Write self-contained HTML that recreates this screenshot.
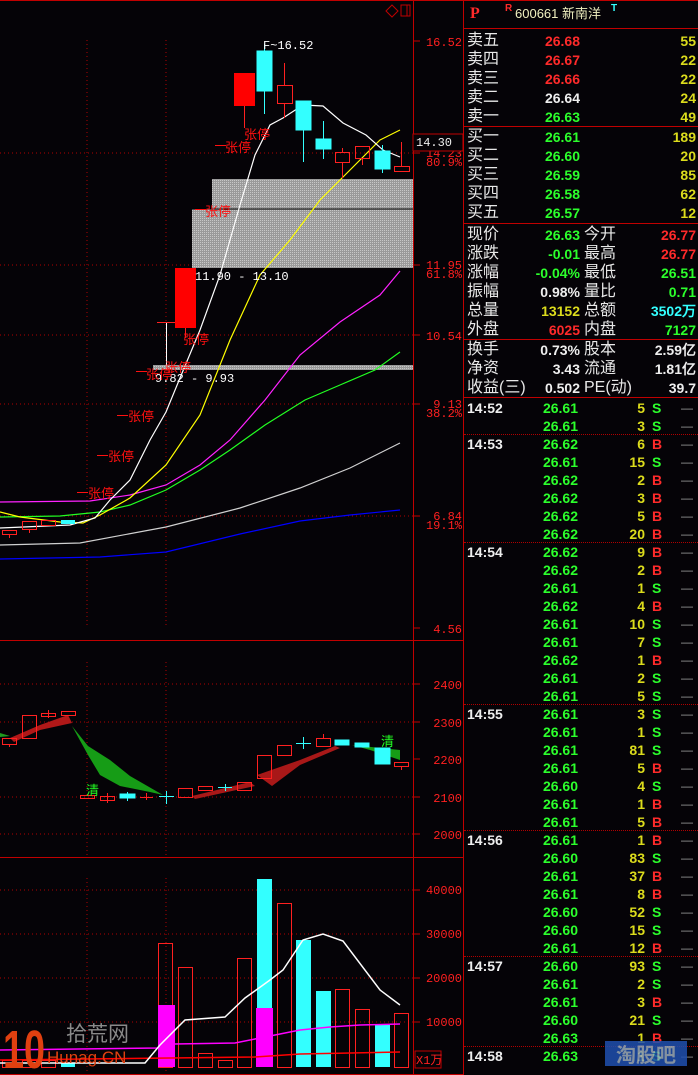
<!DOCTYPE html>
<html><head><meta charset="utf-8">
<style>
html,body{margin:0;padding:0;background:#050307;}
body{width:698px;height:1075px;position:relative;overflow:hidden;font-family:"Liberation Sans","Noto Sans CJK SC",sans-serif;}
.t{position:absolute;white-space:nowrap;line-height:18px;}
.l{font-size:16px;color:#e8e8e8;font-family:"Liberation Sans","Noto Sans CJK SC",sans-serif;}
.n{font-family:"Liberation Sans","DejaVu Sans",sans-serif;font-weight:bold;font-size:14px;}
.r{color:#ff2a2a}.g{color:#2cff2c}.w{color:#eeeeee}.y{color:#dcdc1c}.c{color:#33ffff}.gr{color:#999;font-weight:normal;font-size:12px}
.ra{text-align:right}
</style></head><body>
<svg width="698" height="1075" style="position:absolute;left:0;top:0" xmlns="http://www.w3.org/2000/svg" font-family="Liberation Mono, monospace">
<defs>
<pattern id="gp" width="2" height="2" patternUnits="userSpaceOnUse"><rect width="2" height="2" fill="#9a9a9a"/><rect width="1" height="1" fill="#c8c8c8"/></pattern>
</defs>
<line x1="0" y1="0.5" x2="698" y2="0.5" stroke="#c00000"/>
<line x1="413.5" y1="0" x2="413.5" y2="1075" stroke="#c00000"/>
<line x1="463.5" y1="0" x2="463.5" y2="1075" stroke="#c00000"/>
<line x1="0" y1="640.5" x2="463" y2="640.5" stroke="#c00000"/>
<line x1="0" y1="857.5" x2="463" y2="857.5" stroke="#c00000"/>
<line x1="0" y1="1074.5" x2="463" y2="1074.5" stroke="#c00000"/>
<path d="M392 5 L398 11 L392 17 L386 11 Z" fill="none" stroke="#c00000"/>
<rect x="401" y="5" width="9" height="11" fill="none" stroke="#c00000"/><line x1="407" y1="5" x2="407" y2="16" stroke="#c00000"/>
<g stroke="#b00000" stroke-dasharray="1,3">
<line x1="0" y1="153" x2="413" y2="153"/><line x1="0" y1="265" x2="413" y2="265"/><line x1="0" y1="335" x2="413" y2="335"/>
<line x1="0" y1="404" x2="413" y2="404"/><line x1="0" y1="516" x2="413" y2="516"/>
<line x1="87" y1="40" x2="87" y2="628"/><line x1="166" y1="40" x2="166" y2="628"/>
<line x1="0" y1="684" x2="413" y2="684"/><line x1="0" y1="722" x2="413" y2="722"/><line x1="0" y1="797" x2="413" y2="797"/><line x1="0" y1="834" x2="413" y2="834"/>
<line x1="87" y1="662" x2="87" y2="855"/><line x1="166" y1="662" x2="166" y2="855"/>
<line x1="0" y1="890" x2="413" y2="890"/><line x1="0" y1="934" x2="413" y2="934"/><line x1="0" y1="978" x2="413" y2="978"/><line x1="0" y1="1022" x2="413" y2="1022"/>
<line x1="87" y1="878" x2="87" y2="1072"/><line x1="166" y1="878" x2="166" y2="1072"/>
</g>
<g stroke="#c00000">
<line x1="413" y1="41" x2="420" y2="41"/><line x1="413" y1="153" x2="420" y2="153"/><line x1="413" y1="265" x2="420" y2="265"/><line x1="413" y1="335" x2="420" y2="335"/><line x1="413" y1="404" x2="420" y2="404"/><line x1="413" y1="516" x2="420" y2="516"/><line x1="413" y1="628" x2="420" y2="628"/>
<line x1="413" y1="684" x2="420" y2="684"/><line x1="413" y1="722" x2="420" y2="722"/><line x1="413" y1="759" x2="420" y2="759"/><line x1="413" y1="797" x2="420" y2="797"/><line x1="413" y1="834" x2="420" y2="834"/>
<line x1="413" y1="890" x2="420" y2="890"/><line x1="413" y1="934" x2="420" y2="934"/><line x1="413" y1="978" x2="420" y2="978"/><line x1="413" y1="1022" x2="420" y2="1022"/>
</g>
<g fill="#ff2020" font-size="12" text-anchor="end">
<text x="462" y="46">16.52</text>
<text x="462" y="157">14.23</text><text x="462" y="166">80.9%</text>
<text x="462" y="269">11.95</text><text x="462" y="278">61.8%</text>
<text x="462" y="340">10.54</text>
<text x="462" y="408">9.13</text><text x="462" y="417">38.2%</text>
<text x="462" y="520">6.84</text><text x="462" y="529">19.1%</text>
<text x="462" y="633">4.56</text>
<text x="462" y="689">2400</text><text x="462" y="727">2300</text><text x="462" y="764">2200</text><text x="462" y="802">2100</text><text x="462" y="839">2000</text>
<text x="462" y="894">40000</text><text x="462" y="938">30000</text><text x="462" y="982">20000</text><text x="462" y="1026">10000</text>
</g>
<rect x="413" y="134" width="50" height="17" fill="#050307" stroke="#c00000"/>
<text x="416" y="146" fill="#eee" font-size="12">14.30</text>
<rect x="415" y="1051" width="26" height="17" fill="none" stroke="#c00000"/>
<text x="416" y="1064" fill="#ff2020" font-size="12">X1万</text>
<rect x="212" y="179" width="201" height="30" fill="url(#gp)"/>
<rect x="192" y="209" width="221" height="59" fill="url(#gp)"/>
<line x1="192" y1="209" x2="413" y2="209" stroke="#000"/>
<rect x="153" y="365" width="260" height="5" fill="url(#gp)"/>
<g fill="none" stroke-width="1.2">
<polyline stroke="#0000ff" points="0,559 100,557 166,552 240,534 300,521 350,515 400,510"/>
<polyline stroke="#d0d0d0" points="0,545 80,543 166,527 240,508 300,488 350,468 400,443"/>
<polyline stroke="#22ff22" points="0,517 60,516 100,512 130,505 166,490 200,470 230,450 265,425 305,400 340,385 375,370 400,352"/>
<polyline stroke="#ff22ff" points="0,502 90,501 130,495 166,485 200,465 230,440 265,400 300,355 340,322 380,295 400,271"/>
<polyline stroke="#ffff00" points="0,512 20,517 60,522 83,523 100,515 130,498 166,465 200,415 230,340 260,275 290,240 320,200 350,170 380,140 400,130"/>
<polyline stroke="#ffffff" points="0,528 70,525 95,518 110,500 130,480 150,440 166,412 180,378 200,330 220,275 240,205 255,155 270,125 283,118 303,105 323,106 343,123 366,135 383,150 400,157"/>
</g>
<g stroke="#ff2020" fill="none">
<rect x="2.5" y="530.5" width="14" height="4"/><line x1="9.5" y1="534" x2="9.5" y2="538"/>
<rect x="22.5" y="521.5" width="14" height="8"/><line x1="29.5" y1="529" x2="29.5" y2="533"/>
<rect x="41.5" y="520.5" width="14" height="5"/>
<rect x="277.5" y="85.5" width="15" height="18"/><line x1="284.5" y1="63" x2="284.5" y2="85"/><line x1="284.5" y1="103" x2="284.5" y2="118"/>
<rect x="335.5" y="152.5" width="14" height="10"/><line x1="342.5" y1="148" x2="342.5" y2="152"/><line x1="342.5" y1="162" x2="342.5" y2="178"/>
<rect x="355.5" y="146.5" width="14" height="12"/><line x1="362.5" y1="158" x2="362.5" y2="165"/>
<rect x="394.5" y="166.5" width="15" height="5"/><line x1="401.5" y1="142" x2="401.5" y2="166"/>
<line x1="244.5" y1="106" x2="244.5" y2="128"/><line x1="185.5" y1="328" x2="185.5" y2="338"/>
</g>
<rect x="61" y="520" width="14" height="4" fill="#33ffff"/>
<rect x="234" y="73" width="21" height="33" fill="#ff0000"/>
<rect x="175" y="268" width="21" height="60" fill="#ff0000"/>
<line x1="166.5" y1="322" x2="166.5" y2="370" stroke="#fff"/><line x1="157" y1="322.5" x2="175" y2="322.5" stroke="#ff2020"/>
<g fill="#33ffff" stroke="#33ffff">
<rect x="257" y="51" width="15" height="40"/><line x1="264.5" y1="44" x2="264.5" y2="114"/>
<rect x="296" y="101" width="15" height="29"/><line x1="303.5" y1="130" x2="303.5" y2="162"/>
<rect x="316" y="139" width="15" height="10"/><line x1="323.5" y1="121" x2="323.5" y2="159"/>
<rect x="375" y="151" width="15" height="18"/><line x1="382.5" y1="145" x2="382.5" y2="173"/>
</g>
<text x="263" y="49" fill="#fff" font-size="12">F~16.52</text>
<text x="195" y="280" fill="#fff" font-size="12">11.90 - 13.10</text>
<text x="155" y="382" fill="#fff" font-size="12">9.82 - 9.93</text>
<g fill="#ff1010" font-size="13" font-family="Noto Sans CJK SC, sans-serif">
<text x="244" y="139">张停</text><text x="225" y="152">张停</text><text x="205" y="216">张停</text><text x="183" y="344">张停</text>
<text x="165" y="372">张停</text><text x="146" y="379">张停</text><text x="128" y="421">张停</text><text x="108" y="461">张停</text><text x="88" y="498">张停</text>
</g>
<g stroke="#ff1010"><line x1="215" y1="145.5" x2="226" y2="145.5"/><line x1="195" y1="209.5" x2="206" y2="209.5"/><line x1="136" y1="371.5" x2="147" y2="371.5"/><line x1="117" y1="415.5" x2="128" y2="415.5"/><line x1="97" y1="455.5" x2="108" y2="455.5"/><line x1="77" y1="492.5" x2="88" y2="492.5"/></g>
<polygon fill="#1e9a1e" points="0,733 10,736 0,737"/>
<polygon fill="#b01818" points="10,738 40,725 68,715 72,723 40,730 14,742"/>
<polygon fill="#169c16" points="72,726 88,746 110,760 130,776 163,795 150,792 120,786 100,775 88,755"/>
<polygon fill="#a81818" points="192,796 250,782 255,786 195,799"/>
<polygon fill="#a81818" points="257,775 300,760 335,746 340,748 300,765 272,786"/>
<polygon fill="#169c16" points="352,745 400,750 400,760 370,750"/>
<g stroke="#ff2020" fill="none">
<rect x="2.5" y="738.5" width="14" height="6"/><line x1="9.5" y1="744" x2="9.5" y2="747"/>
<rect x="22.5" y="715.5" width="14" height="23"/>
<rect x="41.5" y="713.5" width="14" height="3"/><line x1="48.5" y1="710" x2="48.5" y2="718"/>
<rect x="61.5" y="711.5" width="14" height="4"/>
<rect x="80.5" y="795.5" width="14" height="3"/>
<rect x="100.5" y="796.5" width="14" height="4"/><line x1="107.5" y1="793" x2="107.5" y2="803"/>
<line x1="140" y1="797.5" x2="153" y2="797.5"/><line x1="146.5" y1="793" x2="146.5" y2="800"/>
<rect x="178.5" y="788.5" width="14" height="9"/>
<rect x="198.5" y="786.5" width="14" height="4"/>
<rect x="237.5" y="782.5" width="14" height="8"/>
<rect x="257.5" y="755.5" width="14" height="23"/>
<rect x="277.5" y="745.5" width="14" height="10"/>
<rect x="316.5" y="738.5" width="14" height="8"/><line x1="323.5" y1="734" x2="323.5" y2="738"/>
<rect x="394.5" y="762.5" width="14" height="4"/><line x1="401.5" y1="766" x2="401.5" y2="770"/>
</g>
<g fill="#33ffff" stroke="#33ffff">
<rect x="120" y="794" width="15" height="4"/><line x1="127.5" y1="792" x2="127.5" y2="801"/>
<line x1="159" y1="796.5" x2="174" y2="796.5"/><line x1="166.5" y1="791" x2="166.5" y2="804"/>
<line x1="218" y1="787.5" x2="232" y2="787.5"/><line x1="225.5" y1="784" x2="225.5" y2="791"/>
<line x1="296" y1="743.5" x2="311" y2="743.5"/><line x1="303.5" y1="737" x2="303.5" y2="749"/>
<rect x="335" y="740" width="14" height="5"/>
<rect x="355" y="743" width="14" height="4"/>
<rect x="375" y="748" width="15" height="16"/>
</g>
<g fill="#22ff22" font-size="13" font-family="Noto Sans CJK SC, sans-serif"><text x="86" y="795">清</text><text x="381" y="746">清</text></g>
<g stroke="#ff2020" fill="none">
<rect x="158.5" y="943.5" width="14" height="124"/>
<rect x="178.5" y="967.5" width="14" height="100"/>
<rect x="198.5" y="1053.5" width="14" height="14"/>
<rect x="218.5" y="1060.5" width="14" height="7"/>
<rect x="237.5" y="958.5" width="14" height="109"/>
<rect x="277.5" y="903.5" width="14" height="164"/>
<rect x="335.5" y="989.5" width="14" height="78"/>
<rect x="355.5" y="1009.5" width="14" height="58"/>
<rect x="394.5" y="1013.5" width="14" height="54"/>
<rect x="2.5" y="1060.5" width="14" height="7"/><rect x="22.5" y="1060.5" width="14" height="7"/><rect x="41.5" y="1060.5" width="14" height="7"/>
</g>
<rect x="158" y="1005" width="17" height="62" fill="#ff00ff"/>
<rect x="257" y="879" width="15" height="188" fill="#33ffff"/>
<rect x="256" y="1008" width="17" height="59" fill="#ff00ff"/>
<rect x="296" y="940" width="15" height="127" fill="#33ffff"/>
<rect x="316" y="991" width="15" height="76" fill="#33ffff"/>
<rect x="375" y="1025" width="15" height="42" fill="#33ffff"/>
<rect x="61" y="1063" width="14" height="4" fill="#33ffff"/>
<polyline fill="none" stroke="#ff00ff" stroke-width="1.5" points="0,1050 158,1048 175,1044 235,1043 275,1035 300,1030 330,1027 360,1025 400,1024"/>
<polyline fill="none" stroke="#ff0000" stroke-width="1.5" points="0,1060 255,1057 300,1054 400,1052"/>
<polyline fill="none" stroke="#ffffff" stroke-width="1.5" points="0,1063 145,1063 160,1045 185,1020 225,1017 245,998 270,980 283,970 303,940 323,934 343,941 380,990 400,1005"/>
<text x="3" y="1068" fill="#e04010" font-size="54" font-weight="bold" font-family="Liberation Sans, sans-serif" textLength="42" lengthAdjust="spacingAndGlyphs">10</text>
<text x="66" y="1041" fill="#8a8a8a" font-size="21" font-family="Noto Sans CJK SC, sans-serif">拾荒网</text>
<text x="47" y="1063" fill="#e04010" font-size="17" font-family="Liberation Sans, sans-serif">Hunag.CN</text>
</svg>

<div style="position:absolute;left:464px;top:28px;width:234px;border-top:1px solid #c00000"></div>
<div style="position:absolute;left:464px;top:126px;width:234px;border-top:1px solid #c00000"></div>
<div style="position:absolute;left:464px;top:223px;width:234px;border-top:1px solid #c00000"></div>
<div style="position:absolute;left:464px;top:339px;width:234px;border-top:1px solid #c00000"></div>
<div style="position:absolute;left:464px;top:397px;width:234px;border-top:1px solid #c00000"></div>

<div class="t r" style="left:470px;top:5px;font-size:16px;font-weight:bold;font-family:'Liberation Serif',serif">P</div>
<div class="t r" style="left:505px;top:0px;font-size:10px;font-weight:bold">R</div>
<div class="t" style="left:515px;top:5px;font-size:13px;color:#f0f0c0;font-family:'Liberation Sans','Noto Sans CJK SC',sans-serif">600661 新南洋</div>
<div class="t c" style="left:611px;top:0px;font-size:10px;font-weight:bold">T</div>

<div id="rp"></div>
<div style="position:absolute;left:605px;top:1041px;width:82px;height:25px;background:#2050b0;opacity:.85;color:#9ab;font-size:20px;font-weight:bold;line-height:25px;text-align:center;font-family:'Noto Sans CJK SC',sans-serif">淘股吧</div>
<script>
var h='';
function T(x,y,cls,txt,w,right){h+='<div class="t '+cls+(right?' ra':'')+'" style="left:'+x+'px;top:'+y+'px;'+(w?'width:'+w+'px;':'')+'">'+txt+'</div>';}
var ob=[['卖五','26.68','r','55'],['卖四','26.67','r','22'],['卖三','26.66','r','22'],['卖二','26.64','w','24'],['卖一','26.63','g','49']];
ob.forEach(function(o,i){var y=32+i*19;T(467,y,'l',o[0]);T(490,y,'n '+o[2],o[1],90,1);T(620,y,'n y',o[3],76,1);});
var bb=[['买一','26.61','189'],['买二','26.60','20'],['买三','26.59','85'],['买四','26.58','62'],['买五','26.57','12']];
bb.forEach(function(o,i){var y=128+i*19;T(467,y,'l',o[0]);T(490,y,'n g',o[1],90,1);T(620,y,'n y',o[2],76,1);});
var st=[['现价','26.63','g','今开','26.77','r'],['涨跌','-0.01','g','最高','26.77','r'],['涨幅','-0.04%','g','最低','26.51','g'],['振幅','0.98%','w','量比','0.71','g'],['总量','13152','y','总额','3502万','c'],['外盘','6025','r','内盘','7127','g']];
st.forEach(function(o,i){var y=226+i*19;T(467,y,'l',o[0]);T(490,y,'n '+o[2],o[1],90,1);T(584,y,'l',o[3]);T(620,y,'n '+o[5],o[4],76,1);});
var s2=[['换手','0.73%','股本','2.59亿'],['净资','3.43','流通','1.81亿'],['收益(三)','0.502','PE(动)','39.7']];
s2.forEach(function(o,i){var y=341+i*19;T(467,y,'l',o[0]);T(490,y,'n w',o[1],90,1);T(584,y,'l',o[2]);T(620,y,'n w',o[3],76,1);});
var tk=[['14:52',[['26.61',5,'S'],['26.61',3,'S']]],['14:53',[['26.62',6,'B'],['26.61',15,'S'],['26.62',2,'B'],['26.62',3,'B'],['26.62',5,'B'],['26.62',20,'B']]],
['14:54',[['26.62',9,'B'],['26.62',2,'B'],['26.61',1,'S'],['26.62',4,'B'],['26.61',10,'S'],['26.61',7,'S'],['26.62',1,'B'],['26.61',2,'S'],['26.61',5,'S']]],
['14:55',[['26.61',3,'S'],['26.61',1,'S'],['26.61',81,'S'],['26.61',5,'B'],['26.60',4,'S'],['26.61',1,'B'],['26.61',5,'B']]],
['14:56',[['26.61',1,'B'],['26.60',83,'S'],['26.61',37,'B'],['26.61',8,'B'],['26.60',52,'S'],['26.60',15,'S'],['26.61',12,'B']]],
['14:57',[['26.60',93,'S'],['26.61',2,'S'],['26.61',3,'B'],['26.60',21,'S'],['26.63',1,'B']]],['14:58',[['26.63',1,'S']]]];
var y=399;
tk.forEach(function(g,gi){ if(gi>0)h+='<div style="position:absolute;left:464px;top:'+(y-1)+'px;width:234px;border-top:1px dotted #b00000"></div>';
 g[1].forEach(function(r,ri){ if(ri==0)T(467,y,'n w',g[0]); T(500,y,'n g',r[0],78,1); T(600,y,'n y',r[1],45,1); T(652,y,'n '+(r[2]=='B'?'r':'g'),r[2]); T(681,y,'n gr','—'); y+=18;});});
document.getElementById('rp').innerHTML=h;
</script>
</body></html>
